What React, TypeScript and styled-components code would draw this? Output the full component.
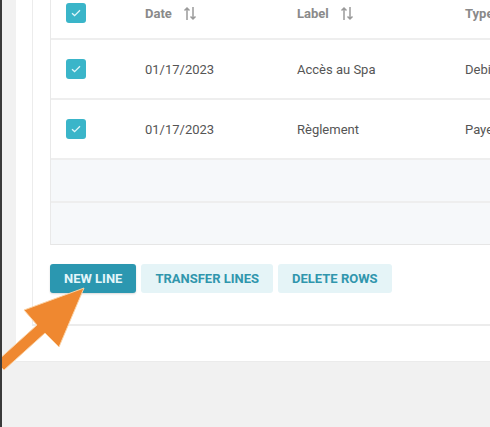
import React from 'react';
import styled, { createGlobalStyle } from 'styled-components';

const GlobalStyle = createGlobalStyle`
  html, body {
    margin: 0;
    padding: 0;
    background: #f1f1f1;
    font-family: Roboto, 'Liberation Sans', Arial, sans-serif;
    overflow: hidden;
  }
`;

const Screen = styled.div`
  position: relative;
  width: 490px;
  height: 427px;
  background: #f1f1f1;
  border-left: 2px solid #3a3a3a;
  box-sizing: border-box;
  overflow: hidden;
`;

const Panel = styled.div`
  margin-left: 14px;
  margin-top: -12px;
  background: #fff;
  padding: 0 0 35px 16px;
  border-bottom: 1px solid #ebebeb;
`;

const Card = styled.div`
  border-left: 1px solid #ececec;
  border-bottom: 2px solid #ececec;
  padding: 0 0 31px 17px;
`;

const Table = styled.div`
  width: 620px;
  border-left: 1px solid #e9e9e9;
  border-bottom: 1px solid #e6e6e6;
`;

const Row = styled.div<{ $h: number; $empty?: boolean }>`
  display: grid;
  grid-template-columns: 94px 152px 168px 1fr;
  align-items: center;
  height: ${p => p.$h}px;
  box-sizing: border-box;
  border-bottom: 2px solid #eeeeee;
  background: ${p => (p.$empty ? '#f6f8fa' : '#fff')};
  &:last-child {
    border-bottom: none;
  }
`;

const CheckCell = styled.div`
  padding-left: 15px;
  display: flex;
  align-items: center;
`;

const Check = styled.span`
  width: 20px;
  height: 20px;
  border-radius: 3px;
  background: #3ab5c9;
  display: flex;
  align-items: center;
  justify-content: center;
`;

const HeadCell = styled.div`
  display: flex;
  align-items: center;
  gap: 11px;
  font-size: 13px;
  font-weight: 700;
  color: #8a8a8a;
  white-space: nowrap;
`;

const Cell = styled.div`
  font-size: 13px;
  color: #555;
  white-space: nowrap;
`;

const Actions = styled.div`
  display: flex;
  gap: 5px;
  margin-top: 19px;
`;

const Btn = styled.button<{ $primary?: boolean }>`
  height: 29px;
  padding: 0 14px;
  border: none;
  border-radius: 3px;
  font-family: Roboto, 'Liberation Sans', Arial, sans-serif;
  font-size: 13px;
  font-weight: 700;
  text-transform: uppercase;
  background: ${p => (p.$primary ? '#2b97b0' : '#e5f4f7')};
  color: ${p => (p.$primary ? '#e4f6fa' : '#3096ad')};
  box-shadow: ${p => (p.$primary ? '0 1px 2px rgba(0,0,0,0.15)' : 'none')};
`;

const Pointer = styled.svg`
  position: absolute;
  left: 0;
  top: 280px;
`;

const CheckMark = () => (
  <Check>
    <svg width="12" height="10" viewBox="0 0 12 10">
      <path d="M2 5.2 L4.6 7.6 L10 2.2" fill="none" stroke="#dff6fa" strokeWidth="1.3" />
    </svg>
  </Check>
);

const SortIcon = () => (
  <svg width="14" height="15" viewBox="0 0 14 15">
    <path d="M4 14 V2 M1.5 4.5 L4 2 L6.5 4.5" fill="none" stroke="#9a9a9a" strokeWidth="1.5" />
    <path d="M10 1 V13 M7.5 10.5 L10 13 L12.5 10.5" fill="none" stroke="#9a9a9a" strokeWidth="1.5" />
  </svg>
);

const rows = [
  { date: '01/17/2023', label: 'Accès au Spa', type: 'Debit' },
  { date: '01/17/2023', label: 'Règlement', type: 'Payer' },
];

export default function App() {
  return (
    <>
      <GlobalStyle />
      <Screen>
        <Panel>
          <Card>
            <Table>
              <Row $h={52}>
                <CheckCell><CheckMark /></CheckCell>
                <HeadCell>Date <SortIcon /></HeadCell>
                <HeadCell>Label <SortIcon /></HeadCell>
                <HeadCell>Type</HeadCell>
              </Row>
              {rows.map((r, i) => (
                <Row $h={60} key={i}>
                  <CheckCell><CheckMark /></CheckCell>
                  <Cell>{r.date}</Cell>
                  <Cell>{r.label}</Cell>
                  <Cell>{r.type}</Cell>
                </Row>
              ))}
              <Row $h={43} $empty />
              <Row $h={41} $empty />
            </Table>
            <Actions>
              <Btn $primary>New line</Btn>
              <Btn>Transfer lines</Btn>
              <Btn>Delete rows</Btn>
            </Actions>
          </Card>
        </Panel>
        <Pointer width="100" height="100" viewBox="0 0 100 100">
          <path
            d="M82 8 L57 67 L43 53 L2 90 L-6 82 L35 45 L22 30 Z"
            fill="#ef8830"
            stroke="#fbd3a6"
            strokeWidth="1"
            strokeLinejoin="round"
          />
        </Pointer>
      </Screen>
    </>
  );
}
